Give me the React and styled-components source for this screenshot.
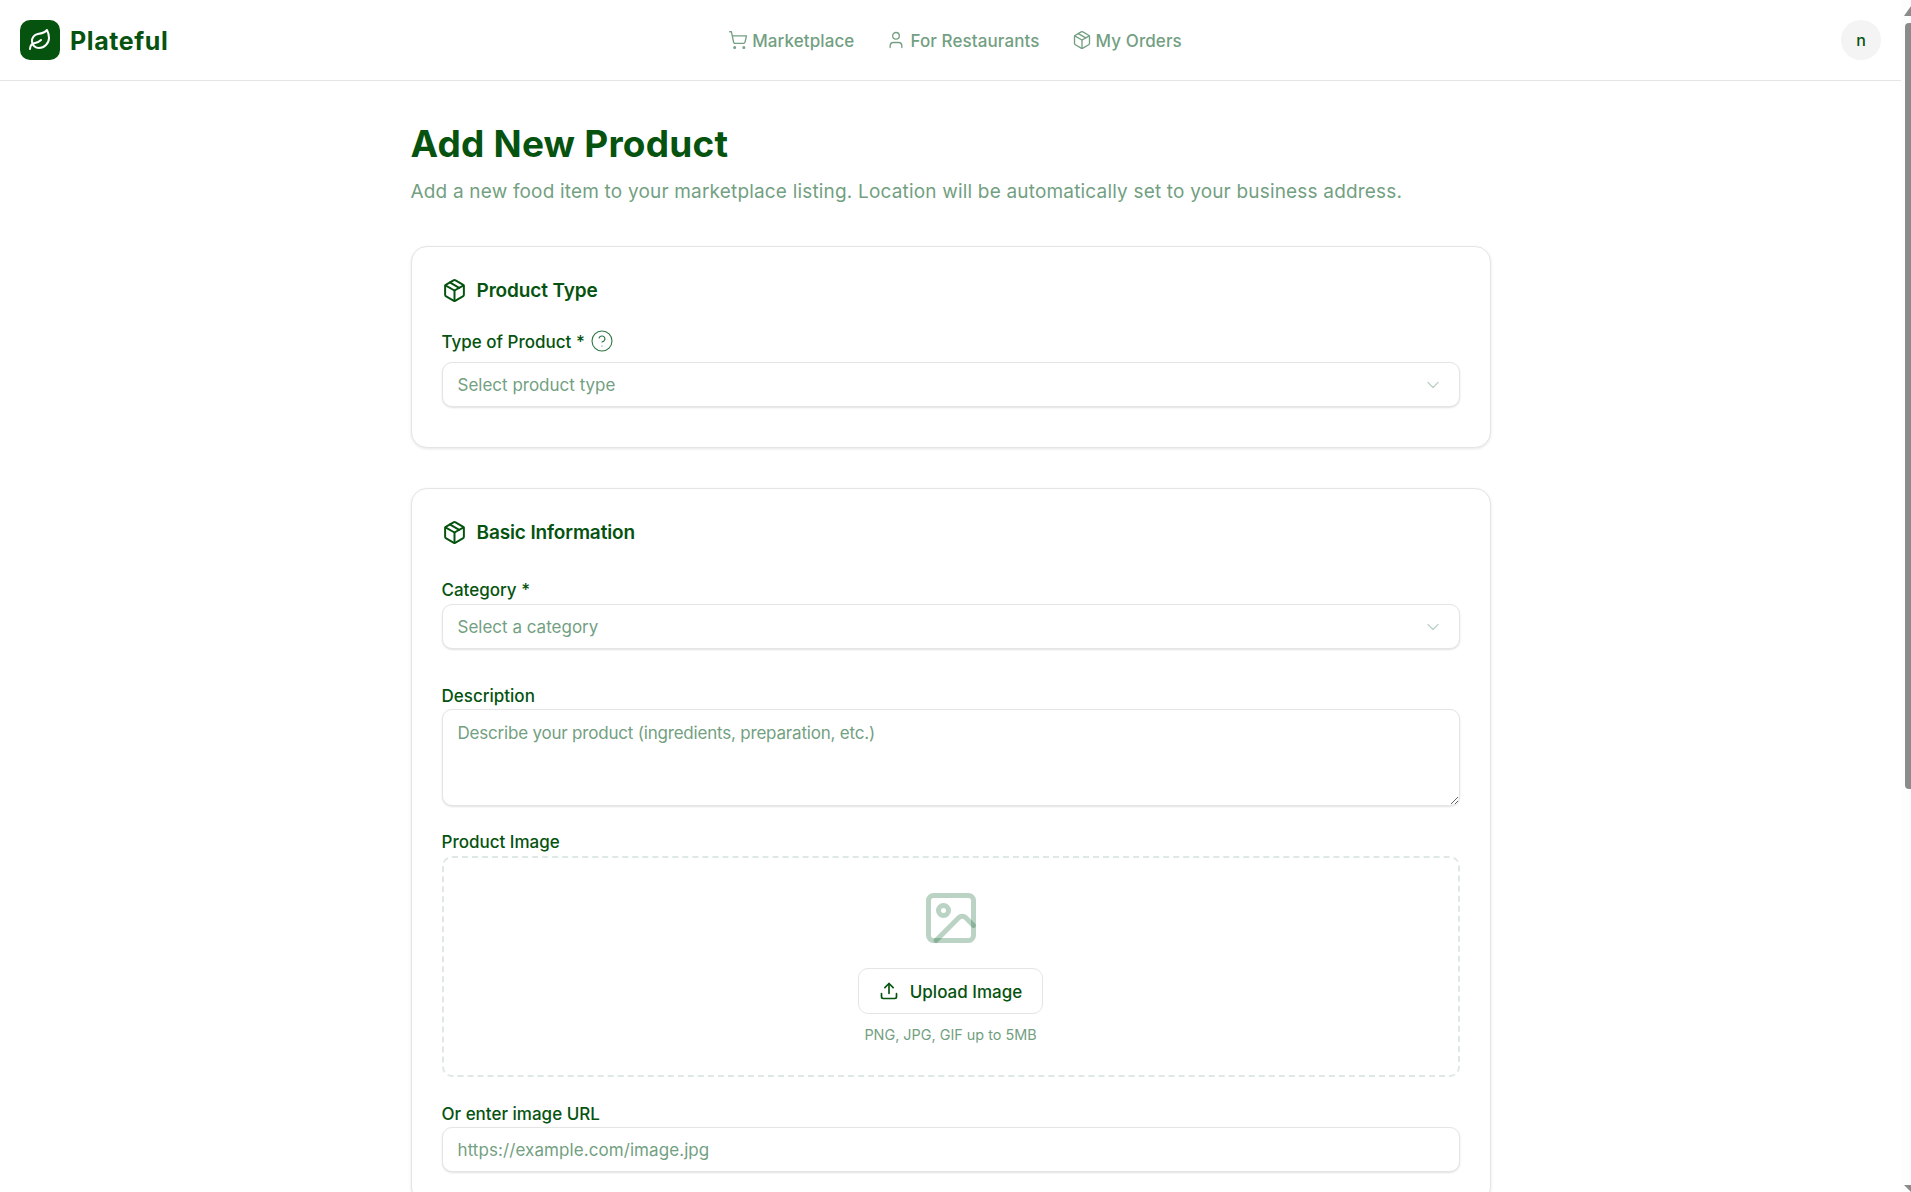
import React from "react";
import styled, { createGlobalStyle } from "styled-components";
import {
  ChevronDown,
  CircleHelp,
  Image as ImageIcon,
  Leaf,
  Package,
  ShoppingCart,
  Upload,
  User,
} from "lucide-react";

const GREEN = "#05530f";
const MUTED = "#739f82";

const GlobalStyle = createGlobalStyle`
  * { box-sizing: border-box; }
  html, body { margin: 0; padding: 0; height: 100%; background: #fff; }
  body {
    font-family: "Inter", "Liberation Sans", sans-serif;
    color: ${GREEN};
  }
`;

const App = () => {
  return (
    <>
      <GlobalStyle />
      <Frame>
        <Page>
          <Header>
            <Brand>
              <LogoBox>
                <Leaf size={24} color="#fff" strokeWidth={2} />
              </LogoBox>
              <BrandName>Plateful</BrandName>
            </Brand>
            <Nav>
              <NavLink>
                <ShoppingCart size={20} strokeWidth={1.6} />
                <NavText>Marketplace</NavText>
              </NavLink>
              <NavLink>
                <User size={20} strokeWidth={1.6} />
                <NavText>For Restaurants</NavText>
              </NavLink>
              <NavLink>
                <Package size={20} strokeWidth={1.6} />
                <NavText>My Orders</NavText>
              </NavLink>
            </Nav>
            <UserArea>
              <Avatar>n</Avatar>
            </UserArea>
          </Header>

          <Main>
            <Title>Add New Product</Title>
            <Subtitle>
              Add a new food item to your marketplace listing. Location will be
              automatically set to your business address.
            </Subtitle>

            <Card>
              <CardHeader>
                <Package size={25} strokeWidth={1.9} />
                <CardTitle>Product Type</CardTitle>
              </CardHeader>
              <LabelRow $top={26} $bottom={11}>
                <Label>Type of Product *</Label>
                <CircleHelp size={24} strokeWidth={1.1} color="#2f7543" />
              </LabelRow>
              <SelectBox>
                Select product type
                <ChevronDown size={20} strokeWidth={1.5} color="#bdd3c3" />
              </SelectBox>
              <CardEnd />
            </Card>

            <Card>
              <CardHeader>
                <Package size={25} strokeWidth={1.9} />
                <CardTitle>Basic Information</CardTitle>
              </CardHeader>
              <LabelRow $top={32} $bottom={5}>
                <Label>Category *</Label>
              </LabelRow>
              <SelectBox>
                Select a category
                <ChevronDown size={20} strokeWidth={1.5} color="#bdd3c3" />
              </SelectBox>
              <LabelRow $top={36} $bottom={4}>
                <Label>Description</Label>
              </LabelRow>
              <TextArea placeholder="Describe your product (ingredients, preparation, etc.)" />
              <LabelRow $top={25} $bottom={5}>
                <Label>Product Image</Label>
              </LabelRow>
              <DropZone>
                <ImageIcon
                  size={60}
                  strokeWidth={2}
                  color="#07602a"
                  strokeOpacity={0.28}
                />
                <UploadButton>
                  <Upload size={20} strokeWidth={2} />
                  <UploadText>Upload Image</UploadText>
                </UploadButton>
                <Hint>PNG, JPG, GIF up to 5MB</Hint>
              </DropZone>
              <LabelRow $top={26} $bottom={4}>
                <Label>Or enter image URL</Label>
              </LabelRow>
              <TextInput placeholder="https://example.com/image.jpg" />
            </Card>
          </Main>
        </Page>

        <ScrollRail>
          <ArrowUp />
          <Thumb />
          <ArrowDown />
        </ScrollRail>
      </Frame>
    </>
  );
};

export default App;

const Frame = styled.div`
  display: flex;
  height: 100vh;
  overflow: hidden;
`;

const Page = styled.div`
  flex: 1;
  min-width: 0;
`;

const Header = styled.header`
  display: flex;
  align-items: center;
  height: 81px;
  padding: 0 20px;
  border-bottom: 1px solid #e5e5e5;
`;

const Brand = styled.div`
  flex: 1;
  display: flex;
  align-items: center;
  gap: 10px;
`;

const LogoBox = styled.div`
  display: flex;
  align-items: center;
  justify-content: center;
  width: 40px;
  height: 40px;
  border-radius: 10px;
  background: ${GREEN};
`;

const BrandName = styled.span`
  padding-top: 2px;
  font-size: 25px;
  font-weight: 700;
  letter-spacing: 0.6px;
  color: ${GREEN};
`;

const Nav = styled.nav`
  display: flex;
  align-items: center;
  gap: 32px;
  margin-left: 9px;
`;

const NavLink = styled.a`
  display: flex;
  align-items: center;
  gap: 4px;
  font-size: 17px;
  font-weight: 500;
  letter-spacing: 0.1px;
  color: ${MUTED};
`;

const NavText = styled.span`
  padding-top: 2px;
`;

const UserArea = styled.div`
  flex: 1;
  display: flex;
  justify-content: flex-end;
`;

const Avatar = styled.div`
  display: flex;
  align-items: center;
  justify-content: center;
  width: 40px;
  height: 40px;
  border-radius: 50%;
  background: #f4f4f4;
  font-size: 16px;
  font-weight: 500;
`;

const Main = styled.main`
  width: 1080px;
  margin: 0 auto;
  padding-top: 43px;
`;

const Title = styled.h1`
  margin: 0;
  font-size: 37px;
  line-height: 40px;
  font-weight: 700;
  letter-spacing: 0.2px;
  color: ${GREEN};
`;

const Subtitle = styled.p`
  margin: 14px 0 40px;
  font-size: 19px;
  line-height: 28px;
  letter-spacing: 0.18px;
  color: ${MUTED};
`;

const Card = styled.section`
  margin-bottom: 40px;
  padding: 30px;
  border: 1px solid #e5e5e5;
  border-radius: 16px;
  box-shadow: 0 1px 3px rgba(0, 0, 0, 0.1);
  background: #fff;
`;

const CardHeader = styled.div`
  display: flex;
  align-items: center;
  gap: 10px;
  height: 28px;
  svg {
    margin-top: -2px;
  }
`;

const CardTitle = styled.h2`
  margin: 0;
  font-size: 19px;
  line-height: 28px;
  font-weight: 600;
  letter-spacing: -0.13px;
  color: ${GREEN};
`;

const LabelRow = styled.div`
  display: flex;
  align-items: center;
  gap: 5px;
  height: 20px;
  margin: ${({ $top }) => $top}px 0 ${({ $bottom }) => $bottom}px;
`;

const Label = styled.label`
  padding-top: 2px;
  font-size: 17px;
  line-height: 20px;
  font-weight: 450;
  color: ${GREEN};
`;

const fieldStyles = `
  display: flex;
  width: 100%;
  padding: 0 15px;
  border: 1px solid #e5e5e5;
  border-radius: 10px;
  box-shadow: 0 1px 2px rgba(0, 0, 0, 0.12);
  background: #fff;
  font-family: "Inter", "Liberation Sans", sans-serif;
  font-size: 17px;
  outline: none;
`;

const SelectBox = styled.div`
  ${fieldStyles}
  align-items: center;
  justify-content: space-between;
  height: 45px;
  padding-right: 16px;
  color: ${MUTED};
`;

const CardEnd = styled.div`
  height: 10px;
`;

const TextArea = styled.textarea`
  ${fieldStyles}
  height: 97px;
  padding-top: 13px;
  letter-spacing: -0.2px;
  color: ${GREEN};
  &::placeholder {
    color: ${MUTED};
    opacity: 1;
  }
`;

const TextInput = styled.input`
  ${fieldStyles}
  height: 45px;
  letter-spacing: 0.08px;
  color: ${GREEN};
  &::placeholder {
    color: ${MUTED};
    opacity: 1;
  }
`;

const DropZone = styled.div`
  display: flex;
  flex-direction: column;
  align-items: center;
  height: 221px;
  padding-top: 30px;
  border: 2px dashed #dfe9e3;
  border-radius: 10px;
`;

const UploadButton = styled.button`
  display: flex;
  align-items: center;
  gap: 11px;
  height: 46px;
  margin-top: 20px;
  padding: 0 20px;
  border: 1px solid #e5e5e5;
  border-radius: 10px;
  background: #fff;
  color: ${GREEN};
  font-family: "Inter", "Liberation Sans", sans-serif;
  font-size: 17px;
  font-weight: 450;
`;

const UploadText = styled.span`
  padding-top: 2px;
`;

const Hint = styled.p`
  margin: 11px 0 0;
  font-size: 14.4px;
  line-height: 20px;
  color: ${MUTED};
`;

const ScrollRail = styled.div`
  display: flex;
  flex-direction: column;
  align-items: flex-end;
  width: 10px;
  background: #fdfdfd;
`;

const ArrowUp = styled.div`
  width: 0;
  height: 0;
  margin: 6px 0 7px;
  border-left: 7px solid transparent;
  border-bottom: 10px solid #8b8b8b;
`;

const Thumb = styled.div`
  width: 6px;
  height: 766px;
  border-radius: 4px 0 0 4px;
  background: #8b8b8b;
`;

const ArrowDown = styled.div`
  width: 0;
  height: 0;
  margin-top: auto;
  border-left: 7px solid transparent;
  border-top: 7px solid #8b8b8b;
`;
